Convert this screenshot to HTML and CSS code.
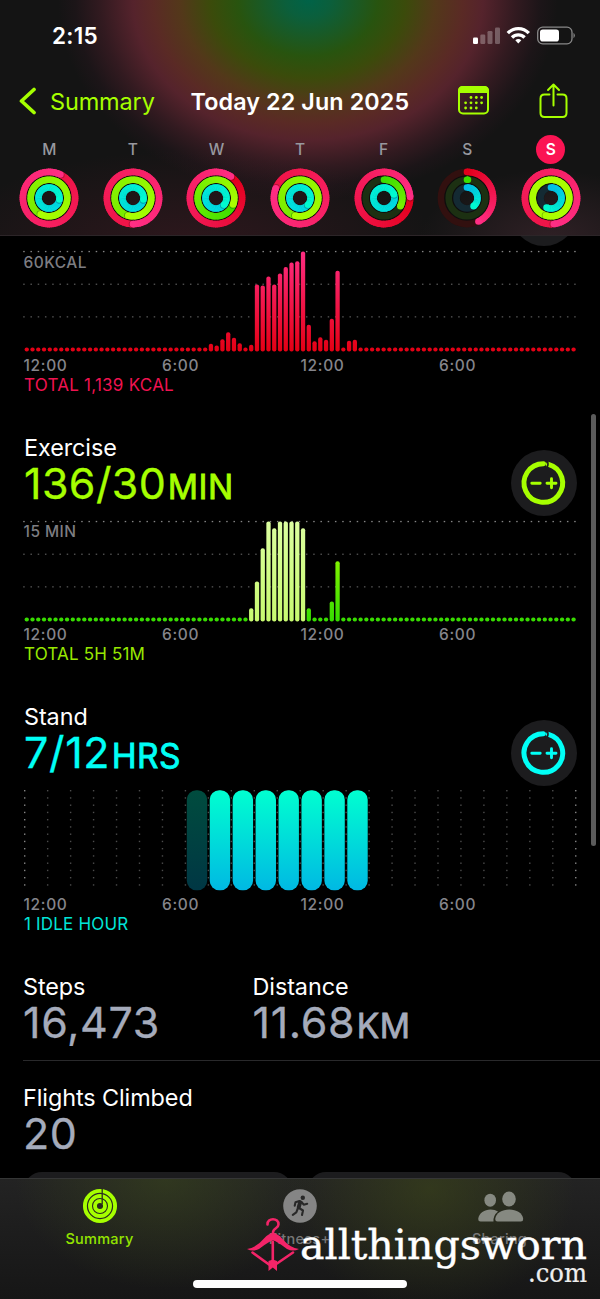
FILE: index.html
```html
<!DOCTYPE html>
<html lang="en">
<head>
<meta charset="utf-8">
<title>Fitness Summary</title>
<link rel="stylesheet" href="styles.css">
</head>
<body>
<div class="phone">
  <header class="top">
    <div class="status">
      <span class="time">2:15</span>
      <svg class="status-icons" width="104" height="20" viewBox="0 0 104 20">
        <rect x="1" y="11.500" width="5" height="6.500" rx="1.300" fill="#fff"/>
        <g fill="#fff" opacity=".28"><rect x="8.300" y="8.500" width="5" height="9.500" rx="1.300"/><rect x="15.500" y="5" width="5" height="13" rx="1.300"/><rect x="23" y="1.500" width="5" height="16.500" rx="1.300"/></g>
        <g fill="none" stroke="#fff" stroke-width="3.300"><path d="M35.800 7.200a14.200 14.200 0 0 1 21 0"/><path d="M40 11.500a8.700 8.700 0 0 1 12.600 0"/></g>
        <path fill="#fff" d="M43.300 14.200a4.600 4.600 0 0 1 6 0l-3 3.300z"/>
        <rect x="65.700" y="1.200" width="34.300" height="16.600" rx="5" fill="none" stroke="#888" stroke-width="1.300"/>
        <rect x="68" y="3.500" width="19" height="12" rx="2.800" fill="#fff"/>
        <path d="M101.500 6.800q2.700 2.700 0 5.500z" fill="#888"/>
      </svg>
    </div>
    <nav class="bar">
      <svg width="20" height="30" viewBox="0 0 20 30"><path d="M15.500 3.500 3 15l12.500 11.500" transform="translate(-.5 0)" fill="none" stroke="#a6ff00" stroke-width="3.700" stroke-linecap="round" stroke-linejoin="round"/></svg>
      <span class="back">Summary</span>
      <h1 class="title">Today 22 Jun 2025</h1>
      <svg class="cal" width="32" height="30" viewBox="0 0 32 30">
        <rect x="1" y="1" width="29" height="26.500" rx="4" fill="none" stroke="#a6ff00" stroke-width="2"/>
        <path d="M0 7V5Q0 0 5 0h21q5 0 5 5v2z" fill="#a6ff00"/>
        <g fill="#a6ff00"><circle cx="13" cy="11.500" r="1.400"/><circle cx="18.300" cy="11.500" r="1.400"/><circle cx="23.600" cy="11.500" r="1.400"/><circle cx="7.600" cy="16.800" r="1.400"/><circle cx="13" cy="16.800" r="1.400"/><circle cx="18.300" cy="16.800" r="1.400"/><circle cx="23.600" cy="16.800" r="1.400"/><circle cx="7.600" cy="22" r="1.400"/><circle cx="13" cy="22" r="1.400"/><circle cx="18.300" cy="22" r="1.400"/></g>
      </svg>
      <svg class="share" width="30" height="38" viewBox="0 0 30 38"><g fill="none" stroke="#a6ff00" stroke-width="2" stroke-linecap="round" stroke-linejoin="round"><path d="M10.500 12.500H5.500q-4 0-4 4v14.500q0 4 4 4h18q4 0 4-4V16.500q0-4-4-4H18.500"/><path d="M14.500 23.500V2.500M9 8l5.500-5.500L20 8"/></g></svg>
    </nav>
    <div class="week" id="week"></div>
  </header>

  <main class="content">
    <div class="peek"></div>
    <section class="metric move">
      <div class="plot"><svg id="moveChart" width="600" height="106"></svg><span class="scale">60KCAL</span></div>
      <div class="ticks"><span>12:00</span><span>6:00</span><span>12:00</span><span>6:00</span></div>
      <div class="total t-move">TOTAL 1,139 KCAL</div>
    </section>

    <section class="metric">
      <div class="head">
        <div><h2>Exercise</h2><div class="value exercise">136/30<small>MIN</small></div></div>
        <div class="goal"><svg width="66" height="66" viewBox="0 0 66 66"><g fill="none" stroke="#a6ff00" stroke-linecap="round"><path stroke-width="5" d="M37.500 14.400A19.300 19.300 0 1 1 32.500 13.700"/><path stroke-width="2.900" d="M20.800 33.300h8.400M36 33.300h9M40.500 28.800v9"/></g><path d="M36.200 10.500q1.600 3.500 0 6.500" stroke="#1c1c1e" stroke-width="1.600" fill="none"/></svg></div>
      </div>
      <div class="plot"><svg id="exChart" width="600" height="106"></svg><span class="scale min">15 MIN</span></div>
      <div class="ticks"><span>12:00</span><span>6:00</span><span>12:00</span><span>6:00</span></div>
      <div class="total t-ex">TOTAL 5H 51M</div>
    </section>

    <section class="metric">
      <div class="head">
        <div><h2 class="h-stand">Stand</h2><div class="value stand">7/12<small>HRS</small></div></div>
        <div class="goal"><svg width="66" height="66" viewBox="0 0 66 66"><g fill="none" stroke="#00fff6" stroke-linecap="round"><path stroke-width="5" d="M37.500 14.400A19.300 19.300 0 1 1 32.500 13.700"/><path stroke-width="2.900" d="M20.800 33.300h8.400M36 33.300h9M40.500 28.800v9"/></g><path d="M36.200 10.500q1.600 3.500 0 6.500" stroke="#1c1c1e" stroke-width="1.600" fill="none"/></svg></div>
      </div>
      <div class="plot"><svg id="standChart" width="600" height="106"></svg></div>
      <div class="ticks"><span>12:00</span><span>6:00</span><span>12:00</span><span>6:00</span></div>
      <div class="total t-stand">1 IDLE HOUR</div>
    </section>

    <section class="stats">
      <div class="stat"><h2>Steps</h2><div class="value grey">16,473</div></div>
      <div class="stat"><h2>Distance</h2><div class="value grey">11.68<small>KM</small></div></div>
    </section>
    <section class="stats last">
      <div class="stat"><h2 class="h-fl">Flights Climbed</h2><div class="value grey">20</div></div>
    </section>
    <div class="cards"><i></i><i></i></div>
  </main>

  <footer class="tabs">
    <div class="tab on">
      <svg width="36" height="36" viewBox="0 0 36 36"><g fill="none" stroke="#a6ff00" stroke-width="3.900"><circle cx="18" cy="18" r="15.100"/><circle cx="18" cy="18" r="10"/><circle cx="18" cy="18" r="5"/></g><path d="M20.200 0v16" stroke="#2a3020" stroke-width="1.300"/></svg>
      <span>Summary</span>
    </div>
    <div class="tab">
      <svg width="36" height="36" viewBox="0 0 36 36"><circle cx="18" cy="18" r="16.800" fill="#858585"/><circle cx="20.800" cy="9.700" r="2.200" fill="#282828"/><g fill="none" stroke="#282828" stroke-linecap="round" stroke-linejoin="round"><path stroke-width="4" d="m18.200 14.200-1.500 5"/><path stroke-width="2.100" d="m17.500 13-4 1.300-.8 3.500M19.500 14l2.200 2.700 3.500-1M17 20l4 2.500-1 4.500M15.800 20.500l-1.500 3.800-3.500 2.500"/></g></svg>
      <span>Fitness+</span>
    </div>
    <div class="tab">
      <svg width="48" height="36" viewBox="0 0 48 36" fill="#868981"><ellipse cx="14.200" cy="12.200" rx="5.800" ry="6.500"/><ellipse cx="33" cy="11" rx="6.800" ry="7.500"/><path d="M4.500 33.500q-2.300 0-2.300-2.500C3 25 8.500 21.500 14.500 21.500q4.500 0 7.500 2-5 4-4.500 10z"/><path d="M21.500 33.500q-2.300 0-2.300-2.500C20 25 26 21.500 33.300 21.500S46.500 25 47.200 31q0 2.500-2.300 2.500z"/></svg>
      <span>Sharing</span>
    </div>
  </footer>

  <div class="scrollbar"></div>
  <div class="home"></div>
  <svg class="mark" width="352" height="84" viewBox="0 0 352 84">
    <g fill="none" stroke="#f32468" stroke-width="2.600" stroke-linecap="round"><path d="M21.500 9.500C21 2.500 33 2.500 32.500 9.500 32.500 13.500 27 13 27 17.500V22M26.800 27v23"/><path d="m6.500 37.500 16.500 12M47 37.500 31 48.500"/></g>
    <path fill="#f32468" d="M1 34Q10 33 18 23.500 23 18 27 18T36 23.500Q44 33 53 34 47 37 41 34 30 25.500 27 25.500 24 25.500 13 34 7 37 1 34ZM22.500 46l4.300-1.500L31 46V56l-4.200-3.500L22.500 56z"/>
    <text class="brand" x="54" y="43.500" textLength="287" lengthAdjust="spacingAndGlyphs">allthingsworn</text>
    <text class="brand dom" x="282" y="66.500" textLength="59" lengthAdjust="spacingAndGlyphs">.com</text>
  </svg>
</div>
<script src="charts.js"></script>
</body>
</html>
```
FILE: styles.css
```css
* { box-sizing: border-box; }
body { margin: 0; background: #000; color: #fff; font-family: Inter, "Liberation Sans", sans-serif; }
.phone { position: relative; width: 600px; height: 1299px; overflow: hidden; display: flex; flex-direction: column; }
.top {
  height: 235.500px; flex: none;
  background:
    radial-gradient(ellipse 250px 100px at 190px 250px, rgba(85,28,42,.42), rgba(85,28,42,0)),
    radial-gradient(ellipse 130px 70px at 550px 240px, rgba(75,45,55,.5), rgba(75,45,55,0)),
    radial-gradient(ellipse 250px 200px at 308px 0, #006348 0, #0b5f3c 9%, #28540f 28%, #3b4b0b 39%, #53381a 51%, #5a2a25 62%, #55232c 70%, #321a20 83%, #1c1518 93%, #141414 100%);
  border-bottom: 1px solid #2c2528;
}
.status { height: 60px; display: flex; justify-content: space-between; padding: 22px 24px 0 52px; }
.time { font-size: 22.500px; line-height: 27px; font-weight: 600; letter-spacing: .3px; }
.status-icons { margin-top: 4px; }
.bar { height: 82px; padding: 0 0 0 19px; display: flex; align-items: center; }
.back { color: #a6ff00; font-size: 23.500px; width: 140px; padding-left: 11px; letter-spacing: -.15px; }
.title { margin: 0; font-size: 23.300px; font-weight: 600; width: 267px; padding-left: 11.500px; letter-spacing: .12px; white-space: nowrap; }
.cal { margin-left: 12px; }
.share { margin-left: 49px; }
.bar svg { flex: none; }
.week { display: grid; grid-template-columns: repeat(7, 83.600px); padding-left: 7.500px; margin-top: -7px; }
.day { display: flex; flex-direction: column; align-items: center; color: #98989f; font-size: 15.500px; font-weight: 500; }
.day b { font-weight: 500; width: 29px; height: 29px; line-height: 29px; text-align: center; border-radius: 50%; }
.day.today b { background: #fb1453; color: #fff; font-weight: 600; }
.day svg { margin-top: 4px; }

.content { flex: none; height: 942.500px; overflow: hidden; }
.peek { width: 66px; height: 66px; border-radius: 50%; background: #1c1c1e; margin: -55.500px 0 -10.500px 511px; }
.metric { height: 269.700px; }
.metric.move { height: 187px; padding-top: 12.500px; }
.head { display: flex; justify-content: space-between; height: 95px; padding: 11px 23px 0 24px; }
h2 { margin: 0; font-size: 23.400px; line-height: 28px; font-weight: 400; letter-spacing: -.08px; }
.value { font-size: 43px; line-height: 42px; font-weight: 400; letter-spacing: .65px; white-space: nowrap; -webkit-text-stroke: .3px currentColor; }
.value small { font-size: 33.500px; margin-left: 1.500px; letter-spacing: .5px; -webkit-text-stroke-width: .8px; }
.exercise { color: #a6ff00; letter-spacing: .4px; } .stand { color: #00fff6; } .grey { color: #a5abbb; }
.goal { width: 66px; height: 66px; border-radius: 50%; background: #1c1c1e; margin-top: 16.500px; }
.plot { height: 106px; position: relative; }
.plot svg { display: block; }
.scale { position: absolute; left: 23.500px; top: 4.500px; font-size: 15.500px; line-height: 19px; font-weight: 500; color: #7d7d82; letter-spacing: .45px; }
.ticks { display: flex; padding-left: 23.500px; height: 20.500px; padding-top: 1.500px; font-size: 15.500px; line-height: 19px; font-weight: 500; color: #85858b; letter-spacing: .65px; }
.ticks span { width: 138.500px; }
.total { padding-left: 24px; font-size: 17px; line-height: 21px; letter-spacing: .25px; }
.t-move { color: #ef1350; } .t-ex { color: #98e800; } .t-stand { color: #00e5d8; }
.t-ex, .t-stand { letter-spacing: .18px; }
.stats { margin-left: 23px; height: 99px; padding-top: 11px; display: grid; grid-template-columns: 229.500px 1fr; border-bottom: 1px solid #29292b; }
.stats.last { height: 111px; padding-top: 23px; border: 0; }
.cards { display: grid; grid-template-columns: 268px 268px; gap: 16px; padding-left: 24px; }
.cards i { height: 40px; border-radius: 18px; background: #1c1c1e; }

.tabs {
  flex: none; height: 121px; display: flex; border-top: 1px solid #353636; padding-top: 9px;
  background:
    radial-gradient(ellipse 150px 110px at 165px 0, rgba(62,76,28,.5), rgba(62,76,28,0)),
    radial-gradient(ellipse 145px 120px at 430px 10px, rgba(62,72,25,.58), rgba(62,72,25,0)),
    linear-gradient(#232323, #161616);
}
.tab { width: 200px; display: flex; flex-direction: column; align-items: center; color: #777; font-size: 14.500px; font-weight: 500; letter-spacing: .25px; }
.tab svg { margin-left: -1px; }
.tab span { line-height: 18px; margin-top: 6px; margin-left: -1px; }
.tab.on { color: #93e300; }
.scrollbar { position: absolute; right: 4.500px; top: 414px; width: 4.500px; height: 432px; border-radius: 3px; background: #5b5b5b; }
.home { position: absolute; left: 193px; top: 1280px; width: 214px; height: 7.500px; border-radius: 4px; background: #fff; }
.mark { position: absolute; left: 246px; top: 1215px; }
.brand { font-family: "DejaVu Serif", serif; font-size: 41.500px; fill: #fff; stroke: #fff; stroke-width: .4px; }
.dom { font-size: 25.500px; fill: #eee; stroke-width: .2px; }
```
FILE: charts.js
```js
const NS = 'http://www.w3.org/2000/svg';
function add(parent, tag, attrs) {
  const node = document.createElementNS(NS, tag);
  for (const k in attrs) node.setAttribute(k, attrs[k]);
  parent.appendChild(node);
  return node;
}

/* Activity rings. Each ring: [start angle, head angle, tail colour, head colour] */
const mix = (a, b, t) => 'rgb(' + a.map((v, i) => Math.round(v + (b[i] - v) * t)) + ')';
const pt = (r, deg) => {
  const a = (deg - 90) * Math.PI / 180;
  return [30 + r * Math.cos(a), 30 + r * Math.sin(a)];
};
const RADII = [26.1, 18.3, 10.5], TRACK = ['#32100f', '#1c3012', '#142a33'];
const RED = [226, 0, 28], ROSE = [238, 20, 70], PINK = [255, 46, 132];
const GRN = [60, 222, 0], LEAF = [120, 236, 0], LIME = [170, 255, 0];
const BLU = [0, 190, 232], AQUA = [0, 214, 228], MINT = [0, 250, 208];
const days = [
  ['M', [-334, 26, ROSE, PINK], [-153, 207, LEAF, LIME], [-262, 98, AQUA, MINT]],
  ['T', [-180, 180, ROSE, PINK], [-165, 195, LEAF, LIME], [-262, 98, AQUA, MINT]],
  ['W', [-325, 35, RED, PINK], [-249, 111, GRN, LIME], [-230, 130, AQUA, MINT]],
  ['T', [-68, 292, ROSE, PINK], [-165, 195, LEAF, LIME], [-230, 130, AQUA, MINT]],
  ['F', [-272, 88, RED, PINK], [0, 117, GRN, LEAF], [-290, 70, AQUA, MINT]],
  ['S', [0, 154, RED, PINK], [0, 3, GRN, GRN], [0, 141, BLU, MINT]],
  ['S', [-186, 174, ROSE, PINK], [-164, 196, LIME, LIME], [0, 205, BLU, MINT]]
];
days.forEach((day, n) => {
  const box = document.createElement('div');
  box.className = 'day' + (n === 6 ? ' today' : '');
  const label = document.createElement('b');
  label.textContent = day[0];
  box.appendChild(label);
  const svg = add(box, 'svg', { width: 60, height: 60, viewBox: '0 0 60 60' });
  add(svg, 'circle', { cx: 30, cy: 30, r: 18, fill: 'none', stroke: '#000', 'stroke-width': 22, opacity: .35 });
  day.slice(1).forEach(([from, to, tail, head], i) => {
    const r = RADII[i], span = to - from, steps = Math.max(1, Math.ceil(span / 4));
    add(svg, 'circle', { cx: 30, cy: 30, r, fill: 'none', stroke: TRACK[i], 'stroke-width': 6.6 });
    if (span < 360) {
      const [cx, cy] = pt(r, from);
      add(svg, 'circle', { cx, cy, r: 3.3, fill: mix(tail, head, 0) });
    }
    for (let s = 0; s < steps; s++) {
      const a = from + span * s / steps, b = Math.min(to, from + span * (s + 1) / steps + 3);
      const [x1, y1] = pt(r, a), [x2, y2] = pt(r, b);
      add(svg, 'path', { d: `M${x1} ${y1}A${r} ${r} 0 0 1 ${x2} ${y2}`, fill: 'none', stroke: mix(tail, head, s / steps), 'stroke-width': 6.6 });
    }
    if (span >= 360) {
      const [sx, sy] = pt(r, to + 180 / Math.PI * 1.1 / r);
      add(svg, 'circle', { cx: sx, cy: sy, r: 3.2, fill: '#000', opacity: .25 });
    }
    const [hx, hy] = pt(r, to);
    add(svg, 'circle', { cx: hx, cy: hy, r: 3.3, fill: mix(tail, head, 1) });
  });
  document.getElementById('week').appendChild(box);
});

/* Bar charts: one bar per quarter hour */
function gradient(svg, id, y1, y2, top, bottom) {
  const g = add(svg, 'linearGradient', { id, gradientUnits: 'userSpaceOnUse', x1: 0, x2: 0, y1, y2 });
  add(g, 'stop', { offset: 0, 'stop-color': top });
  add(g, 'stop', { offset: 1, 'stop-color': bottom });
}
function bars(id, values, fillFor) {
  const svg = document.getElementById(id);
  gradient(svg, id + 'G', 3, 103, id === 'moveChart' ? '#ff2d83' : '#b0ff00', id === 'moveChart' ? '#e40014' : '#36dc00');
  gradient(svg, id + 'L', 3, 103, '#dcffa0', '#c8fa70');
  [3.5, 36.2, 68.8].forEach((y, row) => {
    for (let i = 0; i < 77; i++) add(svg, 'rect', { x: 23.2 + i * 7.25, y: y - .6, width: 1.5, height: 1.3, fill: row ? '#555' : '#858585' });
  });
  for (let i = 0; i < 96; i++) {
    const h = values[i] || 4;
    add(svg, 'rect', { x: 24.6 + i * 5.756, y: 103.5 - h, width: 4.3, height: h, rx: 2, fill: `url(#${id}${fillFor(i)})` });
  }
}
const move = {}, exercise = {};
[7.7, 6, 12.3, 19.3, 13.7, 8.3, 4, 6.7, 67, 66, 75, 67, 78, 84.5, 89, 90.3, 100, 26.7, 10.3, 14.3, 11.7, 32.7, 80.7, 4, 10.7, 11.7]
  .forEach((h, i) => { move[32 + i] = h; });
[13.3, 40, 73.3, 100, 93.3, 100, 100, 100, 100, 93.3, 13.3].forEach((h, i) => { exercise[39 + i] = h; });
exercise[53] = 20;
exercise[54] = 60.3;
bars('moveChart', move, () => 'G');
bars('exChart', exercise, i => (i > 38 && i < 49 ? 'L' : 'G'));

const stand = document.getElementById('standChart');
gradient(stand, 'sg', 3, 103, '#00ffd0', '#00b9e3');
for (let c = 0; c < 25; c++)
  for (let r = 0; r < 14; r++)
    add(stand, 'rect', { x: 24 + c * 22.96, y: 3 + r * 7.25, width: 1.4, height: 1.4, fill: c % 24 ? '#4c4c4c' : '#858585' });
for (let i = 0; i < 8; i++)
  add(stand, 'rect', { x: 186.8 + i * 22.93, y: 3.3, width: 20.4, height: 100, rx: 9.5, fill: i ? 'url(#sg)' : '#00453f' });
gradient(stand, 'idle', 3, 103, '#004c3e', '#003744');
stand.querySelector('rect[rx]').setAttribute('fill', 'url(#idle)');
```
